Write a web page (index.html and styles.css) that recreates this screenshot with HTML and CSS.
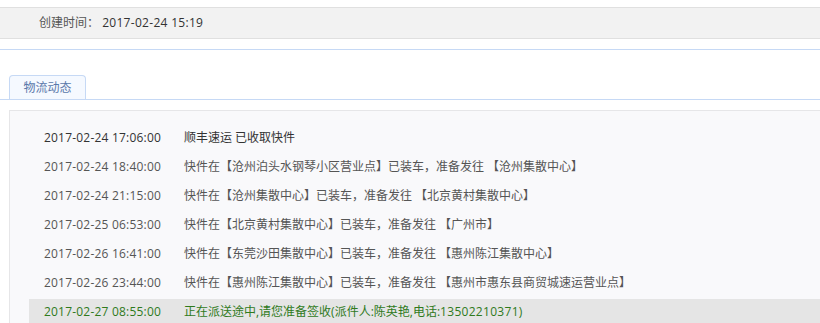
FILE: index.html
```html
<!DOCTYPE html>
<html lang="zh-CN">
<head>
    <meta charset="UTF-8">
    <title>物流动态</title>
    <link rel="stylesheet" href="styles.css">
</head>
<body>
    <div class="order-info">
        <span class="label">创建时间：</span> <span class="num">2017-02-24 15:19</span>
    </div>

    <div class="tab-wrap">
        <div class="tab-bar">
            <div class="tab active">物流动态</div>
        </div>
    </div>

    <div class="track-box">
        <ul class="track-list">
            <li class="first">
                <span class="time">2017-02-24 17:06:00</span>
                <span class="desc">顺丰速运 已收取快件</span>
            </li>
            <li>
                <span class="time">2017-02-24 18:40:00</span>
                <span class="desc">快件在【沧州泊头水钢琴小区营业点】已装车，准备发往 【沧州集散中心】</span>
            </li>
            <li>
                <span class="time">2017-02-24 21:15:00</span>
                <span class="desc">快件在【沧州集散中心】已装车，准备发往 【北京黄村集散中心】</span>
            </li>
            <li>
                <span class="time">2017-02-25 06:53:00</span>
                <span class="desc">快件在【北京黄村集散中心】已装车，准备发往 【广州市】</span>
            </li>
            <li>
                <span class="time">2017-02-26 16:41:00</span>
                <span class="desc">快件在【东莞沙田集散中心】已装车，准备发往 【惠州陈江集散中心】</span>
            </li>
            <li>
                <span class="time">2017-02-26 23:44:00</span>
                <span class="desc">快件在【惠州陈江集散中心】已装车，准备发往 【惠州市惠东县商贸城速运营业点】</span>
            </li>
            <li class="current">
                <span class="time">2017-02-27 08:55:00</span>
                <span class="desc">正在派送途中,请您准备签收(派件人:陈英艳,电话:<span class="num">13502210371</span>)</span>
            </li>
        </ul>
    </div>
</body>
</html>
```

FILE: styles.css
```css
body {
    margin: 0;
    padding: 0;
    background-color: #fff;
    font-family: "Open Sans", "Noto Sans CJK SC", sans-serif;
    font-size: 12px;
    color: #555;
}
.num {
    letter-spacing: 0.3px;
}
.order-info {
    margin-top: 7px;
    height: 30px;
    line-height: 30px;
    padding-left: 39px;
    background-color: #f2f2f2;
    border-top: 1px solid #e0e0e0;
    border-bottom: 1px solid #e0e0e0;
    color: #333;
}
.order-info .label {
    color: #555;
}
.tab-wrap {
    margin-top: 10px;
    border-top: 1px solid #c6d9f5;
    padding-top: 25px;
}
.tab-bar {
    display: flex;
    padding-left: 9px;
    border-bottom: 1px solid #c6d9f5;
}
.tab {
    width: 75px;
    height: 23px;
    line-height: 23px;
    text-align: center;
    border: 1px solid #c6d9f5;
    border-bottom: none;
    border-radius: 4px 4px 0 0;
    background-color: #f5f9ff;
    color: #5a78aa;
}
.track-box {
    margin: 10px 0 0 9px;
    padding: 10px 0 0 19px;
    background-color: #f9f9fb;
    border-top: 1px solid #e6e6e8;
    border-left: 1px solid #e6e6e8;
}
.track-list {
    list-style: none;
    margin: 0;
    padding: 0;
}
.track-list li {
    display: flex;
    height: 25px;
    line-height: 25px;
    margin-top: 4px;
    padding-left: 15px;
}
.track-list .time {
    width: 140px;
    flex-shrink: 0;
    letter-spacing: 0.2px;
}
.track-list .first {
    color: #333;
}
.track-list .current {
    background-color: #e5e5e5;
    color: #2f7a1c;
}
```
